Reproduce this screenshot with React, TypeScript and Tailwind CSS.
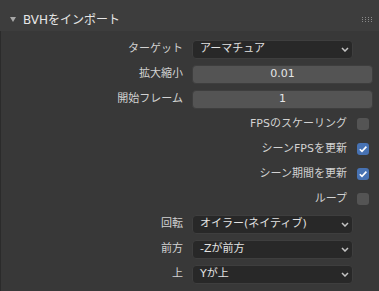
import type { ReactNode } from 'react';

const FONT = {
  fontFamily: '"DejaVu Sans", "Noto Sans CJK JP", sans-serif',
};

function Chevron() {
  return (
    <svg width="8" height="5" viewBox="0 0 8 5" className="shrink-0">
      <path d="M1 1 L4 4 L7 1" fill="none" stroke="#c4c4c4" strokeWidth="1.5" />
    </svg>
  );
}

function Row({ label, children }: { label: string; children: ReactNode }) {
  return (
    <div className="flex h-[20px] items-center">
      <div className="w-[182px] shrink-0 text-right text-[11px] text-[#d2d2d2]">{label}</div>
      <div className="ml-[9px] flex h-full items-center">{children}</div>
    </div>
  );
}

function Dropdown({ value }: { value: string }) {
  return (
    <div className="flex h-[19px] w-[161px] items-center justify-between rounded-[4px] border border-[#3e3e3e] bg-[#282828] pl-[7px] pr-[3px]">
      <span className="text-[11px] text-[#e2e2e2]">{value}</span>
      <Chevron />
    </div>
  );
}

function NumberField({ value }: { value: string }) {
  return (
    <div className="flex h-[19px] w-[181px] items-center justify-center rounded-[4px] border border-[#3e3e3e] bg-[#545454]">
      <span className="text-[11px] text-[#e6e6e6]">{value}</span>
    </div>
  );
}

function CheckRow({ label, checked }: { label: string; checked: boolean }) {
  return (
    <div className="flex h-[20px] items-center justify-end pr-[10px]">
      <span className="text-[11px] text-[#d2d2d2]">{label}</span>
      <div
        className={`ml-[10px] flex h-[12px] w-[12px] items-center justify-center rounded-[3px] ${
          checked ? 'bg-[#4772b3]' : 'bg-[#545454]'
        }`}
      >
        {checked && (
          <svg width="10" height="10" viewBox="0 0 10 10">
            <path d="M1.8 5.2 L4 7.4 L8.4 2.6" fill="none" stroke="#ffffff" strokeWidth="1.6" />
          </svg>
        )}
      </div>
    </div>
  );
}

function DragHandle() {
  const dots = [];
  for (let r = 0; r < 3; r++) {
    for (let c = 0; c < 4; c++) {
      dots.push(<rect key={`${r}-${c}`} x={c * 3} y={r * 2} width="1" height="1" fill="#8a8a8a" />);
    }
  }
  return (
    <svg width="10" height="5" viewBox="0 0 10 5">
      {dots}
    </svg>
  );
}

export default function App() {
  return (
    <div className="h-[291px] w-[379px] overflow-hidden bg-[#383838]" style={FONT}>
      <div className="flex h-[31px] items-center justify-between bg-[#3d3d3d] pl-[10px] pr-[7px] pt-[8px]">
        <div className="flex items-center">
          <svg width="6" height="5" viewBox="0 0 6 5">
            <path d="M0 0 L6 0 L3 5 Z" fill="#a8a8a8" />
          </svg>
          <span className="ml-[7px] text-[12px] text-[#e6e6e6]">BVHをインポート</span>
        </div>
        <DragHandle />
      </div>
      <div className="flex h-[260px] flex-col gap-[5px] border-l border-[#2b2b2b] pt-[8px]">
        <Row label="ターゲット">
          <Dropdown value="アーマチュア" />
        </Row>
        <Row label="拡大縮小">
          <NumberField value="0.01" />
        </Row>
        <Row label="開始フレーム">
          <NumberField value="1" />
        </Row>
        <CheckRow label="FPSのスケーリング" checked={false} />
        <CheckRow label="シーンFPSを更新" checked />
        <CheckRow label="シーン期間を更新" checked />
        <CheckRow label="ループ" checked={false} />
        <Row label="回転">
          <Dropdown value="オイラー(ネイティブ)" />
        </Row>
        <Row label="前方">
          <Dropdown value="-Zが前方" />
        </Row>
        <Row label="上">
          <Dropdown value="Yが上" />
        </Row>
      </div>
    </div>
  );
}
